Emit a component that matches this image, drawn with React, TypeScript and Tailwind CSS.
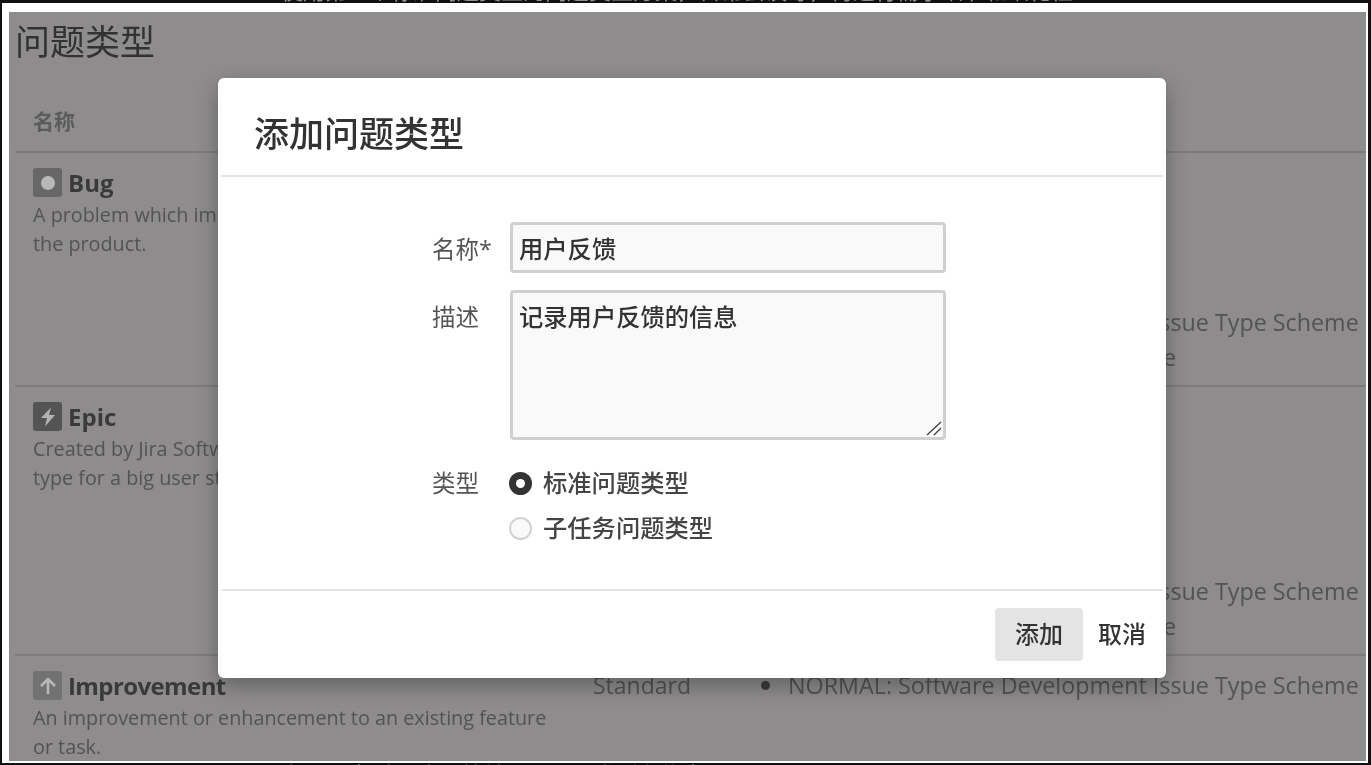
import React from 'react';

const cjk = "font-['Open_Sans','Noto_Sans_CJK_SC',sans-serif]";

interface IssueRow {
  name: string;
  nameClass?: string;
  icon: React.ReactNode;
  desc: string[];
  schemes: string[];
}

const NORMAL = 'NORMAL: Software Development Issue Type Scheme';
const SHORT = 'Agile: Scrum Type Scheme';
const TAIL = 'TASKS: Software Issue Type Scheme';

const rows: IssueRow[] = [
  {
    name: 'Bug',
    icon: (
      <span className="flex w-[29px] h-[29px] items-center justify-center rounded-[3px] bg-[#686767]">
        <span className="w-[14px] h-[14px] rounded-full bg-[#b9b8b8]" />
      </span>
    ),
    desc: ['A problem which impairs or prevents the functions of', 'the product.'],
    schemes: [SHORT, SHORT, SHORT, SHORT, NORMAL, TAIL],
  },
  {
    name: 'Epic',
    icon: (
      <span className="flex w-[29px] h-[29px] items-center justify-center rounded-[3px] bg-[#555454]">
        <svg width="18" height="20" viewBox="0 0 18 20">
          <path d="M12 0.5 L2 11 H8 L6 19.5 L16 8 H10 Z" fill="#b4b3b3" />
        </svg>
      </span>
    ),
    desc: ['Created by Jira Software - do not edit or delete. Issue', 'type for a big user story that needs to be broken down.'],
    schemes: [SHORT, SHORT, SHORT, SHORT, SHORT, NORMAL, TAIL],
  },
  {
    name: 'Improvement',
    nameClass: 'tracking-[-0.6px]',
    icon: (
      <span className="flex w-[29px] h-[29px] items-center justify-center rounded-[3px] bg-[#737272]">
        <svg width="18" height="20" viewBox="0 0 18 20" fill="none" stroke="#b9b8b8" strokeWidth="2.6">
          <path d="M9 18 V3 M2 10 L9 3 L16 10" />
        </svg>
      </span>
    ),
    desc: ['An improvement or enhancement to an existing feature', 'or task.'],
    schemes: [NORMAL],
  },
];

function Row({ row }: { row: IssueRow }) {
  return (
    <div className="flex items-start border-b-2 border-[#7d7b7b] pl-[18px] pt-[12px] pb-[10px]">
      <div className="w-[560px] shrink-0">
        <div className="flex items-center gap-[6px] h-[35px]">
          {row.icon}
          <span className={`text-[24px] font-bold text-[#3b3a3a] ${row.nameClass ?? ''}`}>{row.name}</span>
        </div>
        {row.desc.map((line) => (
          <div key={line} className="text-[19.8px] leading-[29px] text-[#545353] whitespace-nowrap">
            {line}
          </div>
        ))}
      </div>
      <div className="w-[172px] shrink-0 text-[23px] leading-[35px] text-[#545353]">Standard</div>
      <ul className="text-[23.3px] leading-[35px] text-[#545353]">
        {row.schemes.map((s, i) => (
          <li key={i} className="flex items-center whitespace-nowrap">
            <span className="w-[23px] shrink-0">
              <span className="block -ml-[4px] w-[9px] h-[9px] rounded-full bg-[#3d3c3c]" />
            </span>
            {s}
          </li>
        ))}
      </ul>
    </div>
  );
}

function Radio({ checked, label }: { checked?: boolean; label: string }) {
  return (
    <div className="flex items-center gap-[11px] h-[45px] -ml-[1px]">
      {checked ? (
        <span className="flex w-[23px] h-[23px] items-center justify-center rounded-full bg-[#333333]">
          <span className="w-[9px] h-[9px] rounded-full bg-white" />
        </span>
      ) : (
        <span className="w-[23px] h-[23px] rounded-full border-2 border-[#d2d2d2] bg-[#f9f9f9]" />
      )}
      <span className="text-[24.3px] font-medium text-[#444444]">{label}</span>
    </div>
  );
}

export default function App() {
  return (
    <div className={`h-[765px] w-[1371px] flex flex-col overflow-hidden bg-[#111111] pl-[2px] pr-[3px] blur-[0.5px] ${cjk}`}>
      {/* clipped text of the page above */}
      <div className="h-[3px] shrink-0 overflow-hidden pl-[279px] flex items-end">
        <span className="text-[22px] leading-[26px] text-[#8f8f8f] whitespace-nowrap">
          使用第一个标准问题类型的问题类型方案，日常会议等，再进行需求细节和细化任
        </span>
      </div>
      <div className="flex-1 min-h-0 bg-white pl-[7px] pt-[9px] pr-[2px] pb-[2px] flex">
        <div className="relative flex-1 min-w-0 overflow-hidden bg-[#8e8c8c] pl-[6px]">
          <h1 className="h-[70px] pt-[5px] text-[35px] leading-[50px] text-[#333232]">问题类型</h1>
          <div className="h-[71px] flex items-center border-b-2 border-[#7d7b7b] pl-[18px] pt-[10px] text-[21px] font-bold text-[#5c5b5b]">
            名称
          </div>
          {rows.map((row) => (
            <Row key={row.name} row={row} />
          ))}

          {/* add issue type dialog */}
          <div className="absolute left-[209px] top-[66px] w-[948px] h-[600px] flex flex-col rounded-[6px] bg-white shadow-[0_8px_22px_rgba(0,0,0,0.3)]">
            <div className="mx-[3px] h-[99px] shrink-0 flex items-center border-b-2 border-[#e4e4e4] pl-[33px] pt-[16px]">
              <h2 className="text-[35px] font-medium text-[#333333]">添加问题类型</h2>
            </div>
            <div className="flex-1 pl-[214px] pt-[45px]">
              <div className="flex gap-[18px]">
                <label className="w-[60px] text-right leading-[54px] whitespace-nowrap text-[23.5px] text-[#555555]">名称*</label>
                <input
                  readOnly
                  value="用户反馈"
                  className="w-[436px] h-[51px] rounded-[4px] border-[3px] border-[#cfcfcf] bg-[#f9f9f9] px-[6px] text-[24.3px] font-medium text-[#333333] outline-none"
                />
              </div>
              <div className="flex gap-[18px] mt-[14px]">
                <label className="w-[60px] pr-[13px] text-right leading-[54px] whitespace-nowrap text-[23.5px] text-[#555555]">描述</label>
                <div className="relative w-[436px] h-[150px]">
                  <textarea
                    readOnly
                    value="记录用户反馈的信息"
                    className="w-full h-full resize-none rounded-[4px] border-[3px] border-[#cfcfcf] bg-[#f9f9f9] px-[6px] py-[6px] text-[24.3px] font-medium leading-[36px] text-[#333333] outline-none"
                  />
                  <svg className="absolute right-[4px] bottom-[4px]" width="16" height="15" viewBox="0 0 16 15" stroke="#444444" strokeWidth="1.4">
                    <path d="M1 14 L15 1 M8 14 L15 7" />
                  </svg>
                </div>
              </div>
              <div className="flex gap-[18px] mt-[21px]">
                <label className="w-[60px] pr-[13px] text-right leading-[45px] whitespace-nowrap text-[23.5px] text-[#555555]">类型</label>
                <div>
                  <Radio checked label="标准问题类型" />
                  <Radio label="子任务问题类型" />
                </div>
              </div>
            </div>
            <div className="mx-[3px] h-[89px] shrink-0 flex items-center justify-end gap-[15px] border-t-2 border-[#e4e4e4] pr-[17px] pb-[1px]">
              <button className="w-[88px] h-[53px] rounded-[4px] bg-[#e4e4e4] text-[24px] font-medium text-[#333333]">添加</button>
              <button className="text-[24px] font-medium text-[#333333]">取消</button>
            </div>
          </div>
        </div>
      </div>
      {/* clipped text of the page below */}
      <div className="h-[2px] shrink-0 overflow-hidden pl-[262px]">
        <span className="block text-[22px] leading-[22px] text-[#9a9a9a] whitespace-nowrap">
          图标可以帮助用户更快地识别问题类型和信息
        </span>
      </div>
    </div>
  );
}
